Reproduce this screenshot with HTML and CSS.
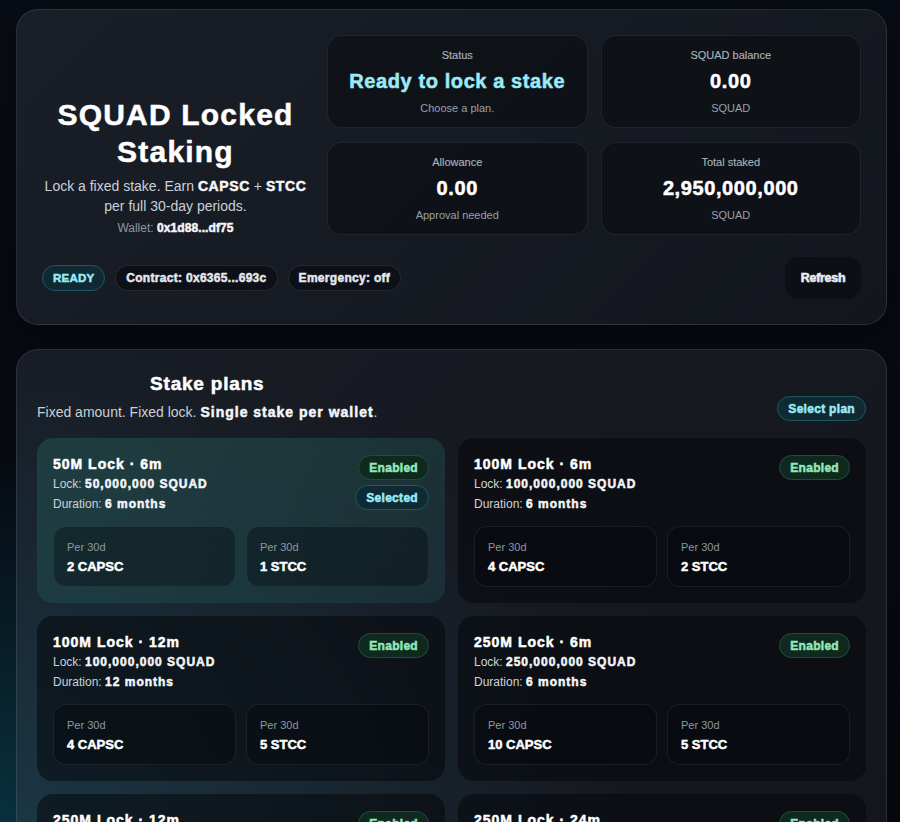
FILE: index.html
```html
<!DOCTYPE html>
<html lang="en">
<head>
<meta charset="utf-8">
<title>SQUAD Locked Staking</title>
<link rel="stylesheet" href="styles.css">
</head>
<body>
<main class="page">
  <section class="card hero">
    <div class="hero-grid">
      <div class="intro">
        <h1 class="title">SQUAD Locked Staking</h1>
        <p class="desc">Lock a fixed stake. Earn <b>CAPSC</b> + <b>STCC</b> per full 30-day periods.</p>
        <p class="wallet">Wallet: <b>0x1d88...df75</b></p>
      </div>
      <div class="stats">
        <div class="stat">
          <div class="stat-label">Status</div>
          <div class="stat-value accent">Ready to lock a stake</div>
          <div class="stat-sub">Choose a plan.</div>
        </div>
        <div class="stat">
          <div class="stat-label">SQUAD balance</div>
          <div class="stat-value">0.00</div>
          <div class="stat-sub">SQUAD</div>
        </div>
        <div class="stat">
          <div class="stat-label">Allowance</div>
          <div class="stat-value">0.00</div>
          <div class="stat-sub">Approval needed</div>
        </div>
        <div class="stat">
          <div class="stat-label">Total staked</div>
          <div class="stat-value">2,950,000,000</div>
          <div class="stat-sub">SQUAD</div>
        </div>
      </div>
    </div>
    <div class="hero-foot">
      <div class="pills">
        <span class="pill pill-cyan">READY</span>
        <span class="pill">Contract: 0x6365...693c</span>
        <span class="pill">Emergency: off</span>
      </div>
      <button class="btn-refresh" type="button">Refresh</button>
    </div>
  </section>

  <section class="card plans">
    <div class="plans-head">
      <div class="plans-headtext">
        <h2 class="plans-title">Stake plans</h2>
        <p class="plans-sub">Fixed amount. Fixed lock. <b>Single stake per wallet</b>.</p>
      </div>
      <span class="pill pill-cyan pill-sm">Select plan</span>
    </div>

    <div class="plan-grid">
      <article class="plan selected">
        <div class="plan-top">
          <div class="plan-info">
            <div class="plan-name">50M Lock · 6m</div>
            <div class="plan-line">Lock: <b>50,000,000 SQUAD</b></div>
            <div class="plan-line">Duration: <b>6 months</b></div>
          </div>
          <div class="plan-badges">
            <span class="pill pill-green pill-sm">Enabled</span>
            <span class="pill pill-cyan pill-sm">Selected</span>
          </div>
        </div>
        <div class="rewards">
          <div class="reward"><div class="reward-label">Per 30d</div><div class="reward-value">2 CAPSC</div></div>
          <div class="reward"><div class="reward-label">Per 30d</div><div class="reward-value">1 STCC</div></div>
        </div>
      </article>

      <article class="plan">
        <div class="plan-top">
          <div class="plan-info">
            <div class="plan-name">100M Lock · 6m</div>
            <div class="plan-line">Lock: <b>100,000,000 SQUAD</b></div>
            <div class="plan-line">Duration: <b>6 months</b></div>
          </div>
          <div class="plan-badges">
            <span class="pill pill-green pill-sm">Enabled</span>
          </div>
        </div>
        <div class="rewards">
          <div class="reward"><div class="reward-label">Per 30d</div><div class="reward-value">4 CAPSC</div></div>
          <div class="reward"><div class="reward-label">Per 30d</div><div class="reward-value">2 STCC</div></div>
        </div>
      </article>

      <article class="plan">
        <div class="plan-top">
          <div class="plan-info">
            <div class="plan-name">100M Lock · 12m</div>
            <div class="plan-line">Lock: <b>100,000,000 SQUAD</b></div>
            <div class="plan-line">Duration: <b>12 months</b></div>
          </div>
          <div class="plan-badges">
            <span class="pill pill-green pill-sm">Enabled</span>
          </div>
        </div>
        <div class="rewards">
          <div class="reward"><div class="reward-label">Per 30d</div><div class="reward-value">4 CAPSC</div></div>
          <div class="reward"><div class="reward-label">Per 30d</div><div class="reward-value">5 STCC</div></div>
        </div>
      </article>

      <article class="plan">
        <div class="plan-top">
          <div class="plan-info">
            <div class="plan-name">250M Lock · 6m</div>
            <div class="plan-line">Lock: <b>250,000,000 SQUAD</b></div>
            <div class="plan-line">Duration: <b>6 months</b></div>
          </div>
          <div class="plan-badges">
            <span class="pill pill-green pill-sm">Enabled</span>
          </div>
        </div>
        <div class="rewards">
          <div class="reward"><div class="reward-label">Per 30d</div><div class="reward-value">10 CAPSC</div></div>
          <div class="reward"><div class="reward-label">Per 30d</div><div class="reward-value">5 STCC</div></div>
        </div>
      </article>

      <article class="plan">
        <div class="plan-top">
          <div class="plan-info">
            <div class="plan-name">250M Lock · 12m</div>
            <div class="plan-line">Lock: <b>250,000,000 SQUAD</b></div>
            <div class="plan-line">Duration: <b>12 months</b></div>
          </div>
          <div class="plan-badges">
            <span class="pill pill-green pill-sm">Enabled</span>
          </div>
        </div>
        <div class="rewards">
          <div class="reward"><div class="reward-label">Per 30d</div><div class="reward-value">10 CAPSC</div></div>
          <div class="reward"><div class="reward-label">Per 30d</div><div class="reward-value">12 STCC</div></div>
        </div>
      </article>

      <article class="plan">
        <div class="plan-top">
          <div class="plan-info">
            <div class="plan-name">250M Lock · 24m</div>
            <div class="plan-line">Lock: <b>250,000,000 SQUAD</b></div>
            <div class="plan-line">Duration: <b>24 months</b></div>
          </div>
          <div class="plan-badges">
            <span class="pill pill-green pill-sm">Enabled</span>
          </div>
        </div>
        <div class="rewards">
          <div class="reward"><div class="reward-label">Per 30d</div><div class="reward-value">10 CAPSC</div></div>
          <div class="reward"><div class="reward-label">Per 30d</div><div class="reward-value">25 STCC</div></div>
        </div>
      </article>
    </div>
  </section>
</main>
</body>
</html>
```

FILE: styles.css
```css
* { box-sizing: border-box; }

html, body { margin: 0; }

body {
  font-family: "Liberation Sans", Arial, sans-serif;
  color: #e8ecf1;
  background-color: #060910;
  background-image:
    radial-gradient(ellipse 55% 45% at 0% 100%, rgba(10, 62, 78, 0.75) 0%, rgba(10, 62, 78, 0) 100%),
    linear-gradient(180deg, #080c14 0%, #05070d 100%);
  background-attachment: fixed;
  min-height: 100vh;
}

/* heavy display weight used for all emphasised text */
b,
.title,
.stat-value,
.pill,
.btn-refresh,
.plans-title,
.plan-name,
.reward-value {
  font-weight: 900;
  -webkit-text-stroke: 0.5px currentColor;
}

b { color: #f4f6f9; }

.page {
  display: flex;
  flex-direction: column;
  gap: 24px;
  padding: 9px 13px 40px 16px;
}

.card {
  border: 1px solid rgba(255, 255, 255, 0.1);
  border-radius: 22px;
}

/* ---------- hero ---------- */
.hero {
  padding: 25px;
  background: linear-gradient(135deg, #1a1f27 0%, #161a22 50%, #13161d 100%);
  box-shadow: 0 10px 30px rgba(0, 0, 0, 0.35);
}

.hero-grid {
  display: grid;
  grid-template-columns: 1fr 2fr;
  gap: 18px;
}

.intro {
  align-self: end;
  text-align: center;
}

.title {
  margin: 0;
  font-size: 30px;
  line-height: 37px;
  letter-spacing: 1.2px;
  color: #ffffff;
}

.desc {
  margin: 6px 0 0;
  font-size: 14px;
  line-height: 20px;
  color: #c9d0d8;
}

.desc b { letter-spacing: 0.6px; }

.wallet {
  margin: 5px 0 0;
  font-size: 12px;
  line-height: 14px;
  color: #8f98a4;
}

.wallet b { letter-spacing: 0.1px; }

.stats {
  display: grid;
  grid-template-columns: 1fr 1fr;
  column-gap: 13px;
  row-gap: 14px;
}

.stat {
  display: flex;
  flex-direction: column;
  align-items: center;
  gap: 9px;
  padding: 13px 12px;
  border: 1px solid rgba(255, 255, 255, 0.08);
  border-radius: 15px;
  background: rgba(10, 13, 17, 0.55);
  text-align: center;
}

.stat-label {
  font-size: 11px;
  line-height: 12px;
  color: #a9b1bd;
  -webkit-text-stroke: 0.15px currentColor;
}

.stat-value {
  font-size: 20px;
  line-height: 23px;
  letter-spacing: 0.6px;
  color: #ffffff;
}

.stat-value.accent { color: #9beaf7; }

.stat-sub {
  font-size: 11px;
  line-height: 12px;
  color: #97a0ad;
}

.hero-foot {
  margin-top: 22px;
  display: flex;
  align-items: center;
  justify-content: space-between;
}

.pills {
  display: flex;
  align-items: center;
  gap: 10px;
}

.pill {
  display: inline-flex;
  align-items: center;
  height: 26px;
  padding: 0 10px;
  border-radius: 999px;
  border: 1px solid rgba(255, 255, 255, 0.1);
  background: #0d1016;
  font-size: 12px;
  letter-spacing: 0.3px;
  color: #e4e8ee;
  white-space: nowrap;
}

.pills .pill-cyan { padding: 0 10px; font-size: 11.5px; letter-spacing: 0.2px; }

.pill-sm { height: 25px; padding: 0 10px; }

.pill-cyan {
  background: #0f2a33;
  border-color: #1e5664;
  color: #9beaf7;
}

.pill-green {
  background: #10291f;
  border-color: #1f4d3b;
  color: #93e8bb;
}

.btn-refresh {
  width: 76px;
  height: 42px;
  border: 0;
  border-radius: 14px;
  background: #0c0f14;
  font-family: "Liberation Sans", Arial, sans-serif;
  font-size: 12.5px;
  letter-spacing: -0.3px;
  color: #e6e9ef;
  text-shadow: 0 0 1px rgba(230, 233, 239, 0.6);
  cursor: pointer;
}

/* ---------- plans ---------- */
.plans {
  padding: 22px 20px 20px;
  background-color: #15171e;
  background-image:
    radial-gradient(ellipse 70% 60% at 0% 100%, rgba(30, 78, 98, 0.55) 0%, rgba(30, 78, 98, 0) 100%),
    linear-gradient(135deg, #181b23 0%, #14161d 100%);
  background-attachment: fixed, scroll;
}

.plans-head {
  display: flex;
  align-items: flex-end;
  justify-content: space-between;
}

.plans-headtext {
  display: flex;
  flex-direction: column;
  align-items: center;
  gap: 6px;
}

.plans-title {
  margin: 0;
  font-size: 19px;
  line-height: 24px;
  letter-spacing: 0.8px;
  color: #ffffff;
}

.plans-sub {
  margin: 0;
  font-size: 14px;
  line-height: 20px;
  color: #c9d0d8;
}

.plans-sub b { letter-spacing: 1px; }

.plans-head .pill { margin-bottom: 1px; }

.plan-grid {
  margin-top: 16px;
  display: grid;
  grid-template-columns: 1fr 1fr;
  gap: 13px;
}

.plan {
  padding: 16px;
  border-radius: 16px;
  background: rgba(6, 8, 11, 0.55);
}

.plan.selected {
  background: linear-gradient(160deg, rgba(40, 100, 92, 0.42) 0%, rgba(30, 80, 84, 0.33) 100%);
}

.plan-top {
  display: flex;
  justify-content: space-between;
  align-items: flex-start;
}

.plan-name {
  font-size: 14px;
  line-height: 20px;
  letter-spacing: 1px;
  color: #ffffff;
}

.plan-line {
  font-size: 12px;
  line-height: 20px;
  color: #cdd3da;
}

.plan-line b { letter-spacing: 1px; }

.plan-badges {
  display: flex;
  flex-direction: column;
  align-items: flex-end;
  gap: 5px;
  padding-top: 1px;
}

.rewards {
  margin-top: 12px;
  display: grid;
  grid-template-columns: 1fr 1fr;
  gap: 10px;
}

.reward {
  display: flex;
  flex-direction: column;
  gap: 5px;
  padding: 13px 13px 11px;
  border: 1px solid rgba(255, 255, 255, 0.08);
  border-radius: 13px;
  background: rgba(4, 6, 9, 0.35);
}

.reward-label {
  font-size: 11px;
  line-height: 14px;
  color: #8e97a3;
}

.reward-value {
  font-size: 13px;
  line-height: 16px;
  color: #ffffff;
}
```
